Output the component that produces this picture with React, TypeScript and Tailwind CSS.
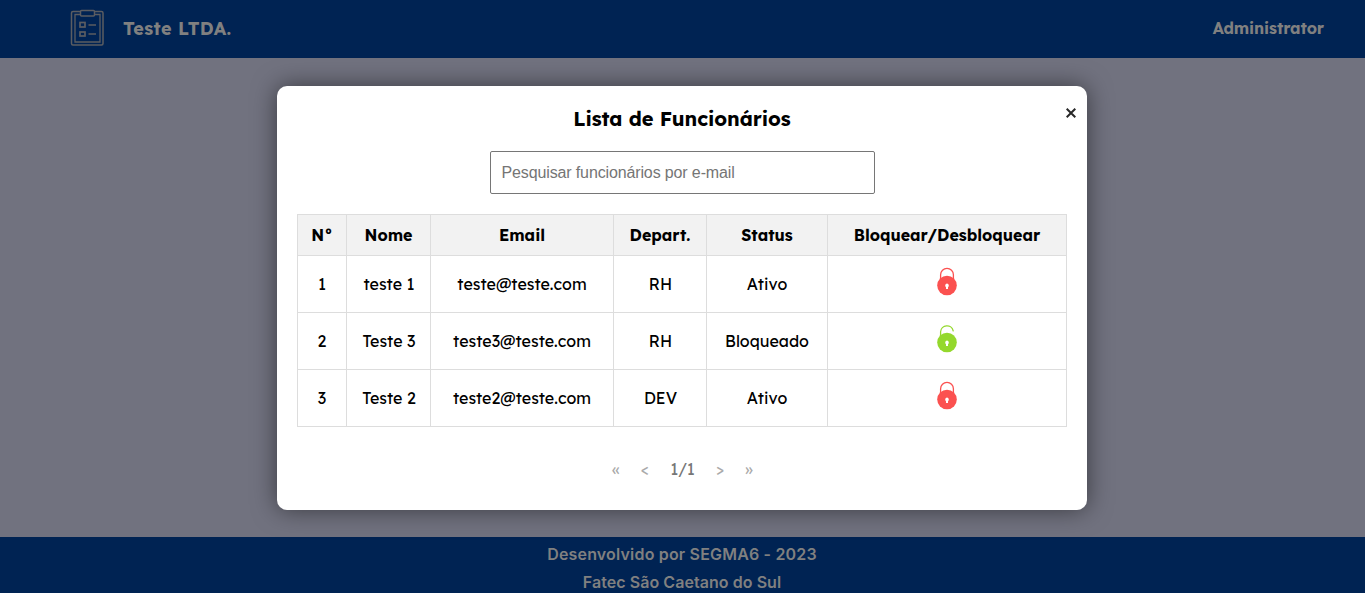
import React from "react";

type Employee = {
  id: number;
  name: string;
  email: string;
  department: string;
  active: boolean;
};

const employees: Employee[] = [
  { id: 1, name: "teste 1", email: "teste@teste.com", department: "RH", active: true },
  { id: 2, name: "Teste 3", email: "teste3@teste.com", department: "RH", active: false },
  { id: 3, name: "Teste 2", email: "teste2@teste.com", department: "DEV", active: true },
];

const columns = [
  { label: "N°", width: "w-[49px]" },
  { label: "Nome", width: "w-[84px]" },
  { label: "Email", width: "w-[183px]" },
  { label: "Depart.", width: "w-[93px]" },
  { label: "Status", width: "w-[121px]" },
  { label: "Bloquear/Desbloquear", width: "w-[239px]" },
];

function ClipboardLogo() {
  return (
    <svg width="34" height="38" viewBox="0 0 34 38" fill="none" stroke="#5b5d62" className="shrink-0">
      <path d="M10.500 2.500H3A1.500 1.500 0 0 0 1.500 4V34.500A1.500 1.500 0 0 0 3 36H31.500A1.500 1.500 0 0 0 33 34.500V4A1.500 1.500 0 0 0 31.500 2.500H24.500" strokeWidth="1.500" />
      <path d="M10 5.500H5V33H30V5.500H25" strokeWidth="1.300" />
      <rect x="10.500" y="1.500" width="14" height="5.500" rx="1" strokeWidth="1.500" />
      <rect x="10" y="13.500" width="5" height="4.500" strokeWidth="1.700" />
      <rect x="10" y="23" width="5" height="4" strokeWidth="1.700" />
      <path d="M18.500 16H26M18.500 25H26" strokeWidth="1.400" />
    </svg>
  );
}

function Padlock({ locked }: { locked: boolean }) {
  const color = locked ? "#fb5150" : "#94d82d";
  return (
    <svg width="20" height="29" viewBox="0 0 20 29" className="mx-auto block">
      <path
        d={locked ? "M3.600 13V7.800A6.400 6.400 0 0 1 16.400 7.800V13" : "M3.600 13V7.800A6.400 6.400 0 0 1 16.200 6.800"}
        fill="none"
        stroke={color}
        strokeWidth="1.300"
        strokeLinecap="round"
      />
      <circle cx="10" cy="18.500" r="9.800" fill={color} />
      <path d="M10 16.600A2 2 0 0 1 11 20.200V22H9V20.200A2 2 0 0 1 10 16.600Z" fill="#fff" />
    </svg>
  );
}

function EmployeeTable() {
  return (
    <table className="mt-5 w-[770px] table-fixed border-separate border-spacing-0 border-t border-l border-[#dddddd] text-center text-[16px] leading-6">
      <thead>
        <tr className="h-[41px] bg-[#f2f2f2]">
          {columns.map((c) => (
            <th key={c.label} className={`${c.width} border-r border-b border-[#dddddd] p-0 font-bold`}>
              {c.label}
            </th>
          ))}
        </tr>
      </thead>
      <tbody>
        {employees.map((e) => (
          <tr key={e.id} className="h-[57px]">
            <td className="border-r border-b border-[#dddddd] p-0">{e.id}</td>
            <td className="border-r border-b border-[#dddddd] p-0 pl-px">{e.name}</td>
            <td className="border-r border-b border-[#dddddd] p-0">{e.email}</td>
            <td className="border-r border-b border-[#dddddd] p-0 pl-px">{e.department}</td>
            <td className="border-r border-b border-[#dddddd] p-0">{e.active ? "Ativo" : "Bloqueado"}</td>
            <td className="border-r border-b border-[#dddddd] p-0 pb-1.5">
              <Padlock locked={e.active} />
            </td>
          </tr>
        ))}
      </tbody>
    </table>
  );
}

export default function App() {
  return (
    <div className="flex h-[593px] w-full flex-col overflow-hidden bg-[#71727f] font-['Lexend','Inter',sans-serif] text-black">
      <header className="flex h-[58px] shrink-0 items-center justify-between bg-[#002353] pr-[41px] pb-0.5 pl-[70px] font-bold text-[#808080]">
        <div className="flex items-center gap-[19px]">
          <ClipboardLogo />
          <span className="text-[18px] tracking-[0.35px]">Teste LTDA.</span>
        </div>
        <span className="text-[16px] tracking-[-0.1px]">Administrator</span>
      </header>

      <main className="flex h-[479px] shrink-0 items-start justify-center pt-7">
        <section className="relative -ml-px flex h-[424px] w-[810px] flex-col items-center rounded-[10px] bg-white px-5 shadow-[0_0_24px_rgba(0,0,0,0.5)]">
          <h1 className="mt-[18px] text-[20px] leading-[30px] font-bold tracking-[-0.07px]">Lista de Funcionários</h1>
          <button aria-label="Fechar" className="absolute top-[22px] right-[11px]">
            <svg width="10" height="10" viewBox="0 0 10 10" stroke="#282828" strokeWidth="2" className="block">
              <path d="M0.700 0.700L9.300 9.300M9.300 0.700L0.700 9.300" />
            </svg>
          </button>
          <input
            placeholder="Pesquisar funcionários por e-mail"
            className="mt-[17px] h-[43px] w-[385px] shrink-0 rounded-[2px] border border-[#767676] px-[11px] font-['Liberation_Sans',Arial,sans-serif] text-[16px] tracking-[-0.13px] placeholder:text-[#757575]"
          />
          <EmployeeTable />
          <nav className="mt-[30px] flex h-6 items-center pl-px text-[16px] text-[#aaaaaa]">
            <span className="w-[29px] text-center">«</span>
            <span className="w-[29px] text-center">&lt;</span>
            <span className="w-[46px] text-center text-[#777777]">1/1</span>
            <span className="w-[29px] text-center">&gt;</span>
            <span className="w-[29px] text-center">»</span>
          </nav>
        </section>
      </main>

      <footer className="flex h-14 shrink-0 flex-col items-center bg-[#002353] pt-[3px] pr-px font-['Inter',sans-serif] text-[16px] leading-7 font-semibold text-[#808080]">
        <p className="tracking-[0.18px]">Desenvolvido por SEGMA6 - 2023</p>
        <p className="tracking-[0.06px]">Fatec São Caetano do Sul</p>
      </footer>
    </div>
  );
}
